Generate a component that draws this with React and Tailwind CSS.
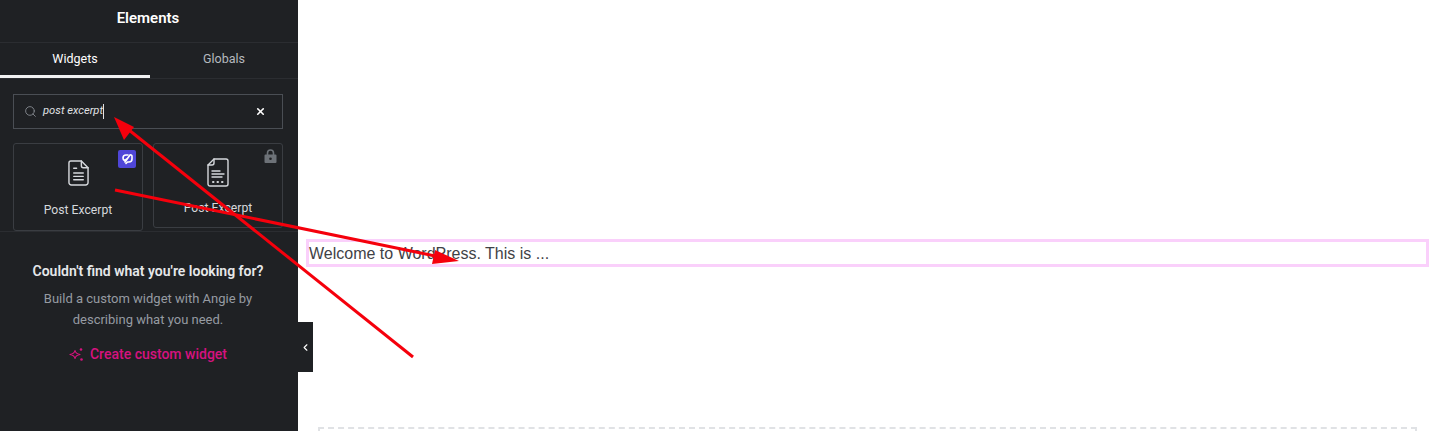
import React from 'react'
import { Search, X, ChevronLeft } from 'lucide-react'

const PostIcon = () => (
	<svg width="21" height="26" viewBox="0 0 22 27" fill="none" stroke="#d5d8dc" strokeWidth="1.500" strokeLinecap="round" strokeLinejoin="round">
		<path d="M3 1h11l7 7v15.500a2.500 2.500 0 0 1-2.500 2.500h-15A2.500 2.500 0 0 1 1 23.500V3a2 2 0 0 1 2-2z" />
		<path d="M14 1v5a2 2 0 0 0 2 2h5" />
		<path d="M6 8.500h3M6 13.500h10M6 17h10M6 20.500h10" />
	</svg>
)

const PostProIcon = () => (
	<svg width="22" height="29" viewBox="0 0 22 29" fill="none" stroke="#d5d8dc" strokeWidth="1.400" strokeLinecap="round" strokeLinejoin="round">
		<path d="M7 1h12a2 2 0 0 1 2 2v23a2 2 0 0 1-2 2H3a2 2 0 0 1-2-2V7z" />
		<path d="M7 1v4a2 2 0 0 1-2 2H1" />
		<path d="M5 13h8M5 16h12M5 19h10" />
		<path d="M6 24h.5M10.500 24h.5M15 24h.5" strokeWidth="2" />
	</svg>
)

const LockIcon = () => (
	<svg width="13" height="14" viewBox="0 0 13 14" className="absolute top-[5px] right-[5px]">
		<path d="M3.500 6V4a3 3 0 0 1 6 0v2" fill="none" stroke="#6d7278" strokeWidth="1.600" />
		<path d="M1.500 5.500h10a1 1 0 0 1 1 1V13a1 1 0 0 1-1 1h-10a1 1 0 0 1-1-1V6.500a1 1 0 0 1 1-1z" fill="#6d7278" />
		<circle cx="6.500" cy="9.700" r="1.300" fill="#1f2124" />
	</svg>
)

const AngieBadge = () => (
	<div className="absolute top-[6px] right-[6px] flex h-[18px] w-[18px] items-center justify-center rounded-[2px] bg-[#4f46d8]">
		<svg width="14" height="14" viewBox="0 0 14 14" fill="none" stroke="#ffffff" strokeWidth="1.600" strokeLinecap="round" strokeLinejoin="round">
			<path d="M8 3H6a3 3 0 0 0-3 3c0 1.200.500 2 1.500 2.600l2-1.600" />
			<path d="M6 11.500l1.500-1.500H9a3 3 0 0 0 3-3V4.500a1.500 1.500 0 0 0-2-1.500L5 10" />
		</svg>
	</div>
)

const Sparkle = () => (
	<svg width="15" height="15" viewBox="0 0 15 15" fill="none" stroke="#d6127f" strokeWidth="1.200" strokeLinejoin="round">
		<path d="M6 3.500c.4 2.300 1.400 3.300 5 4-3.600.7-4.600 1.700-5 4-.4-2.300-1.400-3.300-5-4 3.600-.7 4.600-1.700 5-4z" />
		<circle cx="12" cy="2.500" r="1.300" fill="#d6127f" stroke="none" />
		<circle cx="12.500" cy="12.500" r="1.300" fill="#d6127f" stroke="none" />
	</svg>
)

const App = () => {
	return (
		<div className="relative flex h-[431px] w-[1433px] overflow-hidden bg-white font-['Roboto',sans-serif]">
			{/* sidebar */}
			<aside className="relative w-[298px] shrink-0 bg-[#1f2124] text-[#d5d8dc]">
				<div className="flex h-[43px] items-center justify-center border-b border-[#2b2d31] pb-[5px] pr-[2px] text-[15px] font-semibold text-white">Elements</div>
				<div className="flex h-[36px] border-b border-[#2b2d31] text-[12.500px]">
					<div className="flex w-[150px] items-center justify-center border-b-[3px] border-[#f1f2f3] text-white">Widgets</div>
					<div className="flex flex-1 items-center justify-center pb-[2px] text-[#b5b9bf]">Globals</div>
				</div>
				<div className="px-[13px] pt-[15px]">
					<div className="flex h-[35px] w-[270px] items-center border border-[#4a4e54] pl-[10px] pr-[16px]">
						<Search size={13} color="#8a8f96" strokeWidth={1.600} />
						<span className="ml-[6px] text-[11.200px] italic text-[#e0e2e5]">post excerpt</span>
						<span className="h-[15px] w-px bg-[#e0e2e5]" />
						<X size={11} color="#ffffff" strokeWidth={3.500} className="ml-auto" />
					</div>
					<div className="mt-[14px] flex items-start gap-[10px]">
						<div className="relative flex h-[88px] w-[130px] flex-col items-center rounded-[3px] border border-[#3a3d42] pt-[16px]">
							<PostIcon />
							<span className="mt-[15px] text-[12.200px] text-[#d5d8dc]">Post Excerpt</span>
							<AngieBadge />
						</div>
						<div className="relative flex h-[85px] w-[130px] flex-col items-center rounded-[3px] border border-[#3a3d42] pt-[14px]">
							<PostProIcon />
							<span className="mt-[12px] text-[12.200px] text-[#d5d8dc]">Post Excerpt</span>
							<LockIcon />
						</div>
					</div>
				</div>
				<div className="flex flex-col items-center border-t border-[#2b2d31] pr-[2px] pt-[29px]">
					<p className="text-[14px] leading-[20px] font-semibold text-[#e6e8ea]">Couldn't find what you're looking for?</p>
					<p className="mt-[7px] w-[240px] text-center text-[13px] leading-[21px] text-[#969ba2]">Build a custom widget with Angie by describing what you need.</p>
					<div className="mt-[14px] flex items-center gap-[6px] text-[14px] font-medium text-[#d6127f]">
						<Sparkle />
						<span>Create custom widget</span>
					</div>
				</div>
				{/* collapse tab */}
				<div className="absolute top-[322px] left-[298px] flex h-[50px] w-[15px] items-center justify-center bg-[#1f2124]">
					<ChevronLeft size={11} color="#ffffff" strokeWidth={2.500} />
				</div>
			</aside>

			{/* canvas */}
			<main className="flex-1 pl-[8px] pr-[4px] pt-[239px]">
				<div className="flex h-[28px] items-center border-[3px] border-[#fad0fb] pt-[2px] font-['Liberation_Sans',sans-serif] text-[16px] text-[#3f4246]">
					Welcome to WordPress. This is ...
				</div>
				<div className="mx-[12px] mt-[160px] h-[20px] border-2 border-dashed border-[#e0e2e5]" />
			</main>

			{/* annotation arrows */}
			<svg className="absolute inset-0" width="1433" height="431" viewBox="0 0 1433 431" fill="none">
				<path d="M413 357 124 126" stroke="#f5000c" strokeWidth="3" />
				<path d="M114 117 134 127 124 140z" fill="#f5000c" />
				<path d="M115 190 440 257" stroke="#f5000c" strokeWidth="3" />
				<path d="M459 261 432 264 435 250z" fill="#f5000c" />
			</svg>
		</div>
	)
}

export default App
